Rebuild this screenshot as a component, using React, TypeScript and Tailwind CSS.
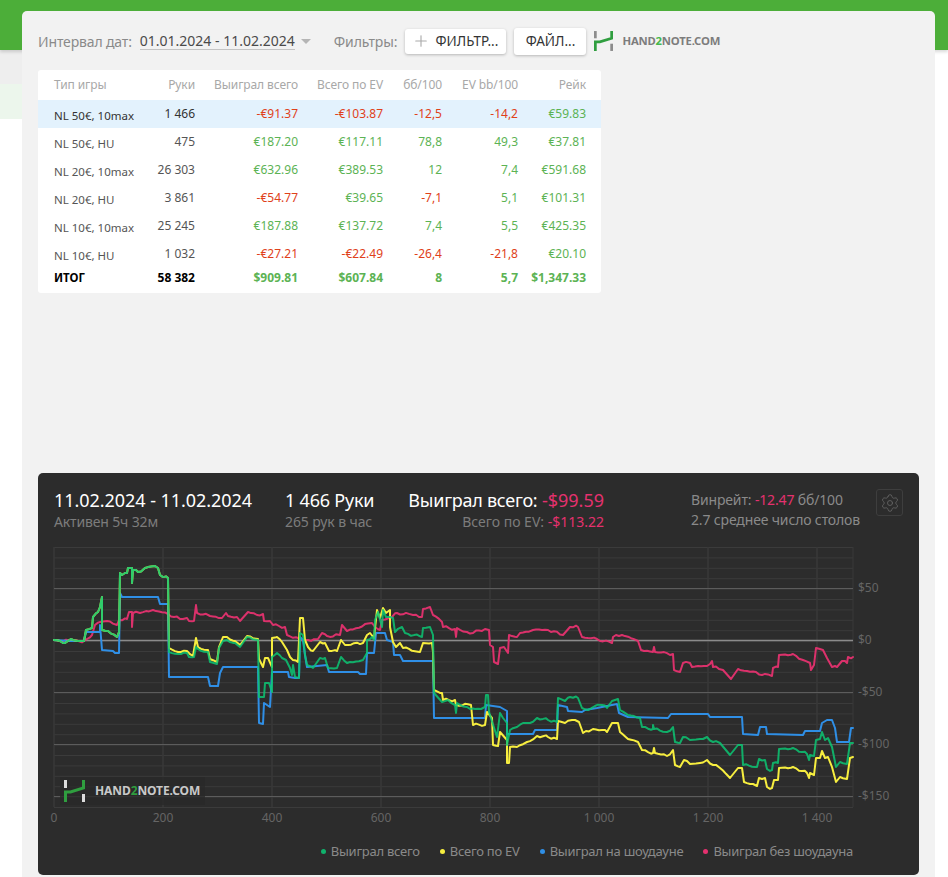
import React from "react";
import { Plus, Settings } from "lucide-react";

const rows = [
  { name: "NL 50€, 10max", hands: "1 466", won: "-€91.37", ev: "-€103.87", bb: "-12,5", evbb: "-14,2", rake: "€59.83" },
  { name: "NL 50€, HU", hands: "475", won: "€187.20", ev: "€117.11", bb: "78,8", evbb: "49,3", rake: "€37.81" },
  { name: "NL 20€, 10max", hands: "26 303", won: "€632.96", ev: "€389.53", bb: "12", evbb: "7,4", rake: "€591.68" },
  { name: "NL 20€, HU", hands: "3 861", won: "-€54.77", ev: "€39.65", bb: "-7,1", evbb: "5,1", rake: "€101.31" },
  { name: "NL 10€, 10max", hands: "25 245", won: "€187.88", ev: "€137.72", bb: "7,4", evbb: "5,5", rake: "€425.35" },
  { name: "NL 10€, HU", hands: "1 032", won: "-€27.21", ev: "-€22.49", bb: "-26,4", evbb: "-21,8", rake: "€20.10" },
];

const GRID = "grid grid-cols-[81px_60px_103px_85px_59px_76px_68px] pl-4 pr-[15px] whitespace-nowrap";

const sign = (v: string) => (v.startsWith("-") ? "text-[#e0411a]" : "text-[#5cb354]");

const green =
  "54,640 60,641 65,643 71,639 78,641 84,641 86,630 92,628 93,617 98,612 100,607 102,597 102,630 108,631 117,637 119,632 120,573 122,575 127,573 128,568 132,568 132,583 133,570 138,572 145,568 155,566 158,568 160,575 168,578 169,652 178,654 187,653 189,657 194,657 196,647 198,649 208,652 210,662 217,664 219,648 223,641 227,640 235,643 240,647 247,637 258,640 259,697 264,697 265,683 269,683 272,692 272,657 277,653 282,658 286,660 290,668 292,675 293,665 295,677 299,678 300,633 303,635 305,655 307,665 313,668 320,658 325,658 328,668 337,668 341,657 347,663 363,660 367,653 367,640 372,637 374,640 375,620 378,612 382,627 383,610 386,617 390,617 393,618 395,632 402,627 405,633 422,637 423,628 430,627 433,635 434,693 442,702 448,700 455,705 456,713 457,703 467,707 475,709 485,707 486,695 488,695 489,712 497,737 500,713 503,718 507,723 507,745 510,730 517,727 523,723 530,723 537,718 548,720 557,722 558,698 565,701 570,697 578,698 582,708 588,710 595,706 602,705 607,708 612,701 618,699 620,710 628,715 640,718 642,727 653,729 653,725 654,729 667,732 673,727 675,742 680,743 683,737 690,740 700,739 707,737 713,742 720,743 730,755 738,745 742,745 743,765 757,767 759,759 765,760 767,769 772,770 773,763 778,763 779,749 793,748 807,754 809,760 810,755 814,756 816,740 820,739 822,732 825,740 828,738 832,747 836,767 840,762 847,764 850,743 853,743";

const yellow =
  "54,640 60,641 65,643 71,639 78,641 84,641 86,630 92,628 93,617 98,612 100,607 102,597 102,630 108,631 117,637 119,632 120,573 122,575 127,573 128,568 132,568 132,583 133,570 138,572 145,568 155,566 158,568 160,575 168,578 169,648 178,652 187,651 193,656 196,638 198,647 208,650 210,659 217,662 219,647 223,637 227,637 235,641 240,645 247,636 258,639 259,659 263,667 265,658 268,658 272,667 272,638 277,637 282,642 287,650 290,657 298,662 300,618 303,618 305,640 308,647 313,651 320,642 325,643 329,651 337,651 341,640 345,645 363,643 367,635 370,633 374,638 377,610 380,618 383,608 386,613 390,610 390,627 393,642 396,647 400,643 403,648 420,652 423,643 432,643 433,652 434,690 442,693 443,700 455,700 456,705 471,705 473,725 485,725 487,712 492,718 493,745 498,746 500,732 507,740 507,763 509,763 510,747 517,747 527,742 537,736 548,737 557,739 558,721 565,723 572,720 579,722 583,733 593,729 602,730 607,732 612,723 618,723 620,732 628,739 638,742 642,750 653,753 654,748 655,753 667,756 673,750 675,765 680,767 684,760 690,764 700,763 707,760 713,765 720,768 730,778 738,768 742,768 744,782 757,786 759,778 765,778 767,787 772,788 774,780 778,780 779,768 793,767 807,773 809,778 810,773 814,775 816,758 820,758 822,751 825,758 828,757 832,767 836,782 840,777 847,779 850,758 853,757";

const blue =
  "54,640 70,641 84,641 86,632 100,632 100,625 102,650 113,651 115,653 119,653 120,593 122,597 158,597 160,604 168,604 169,677 208,677 210,686 218,686 220,673 223,667 258,667 259,723 263,724 264,703 270,707 272,672 288,672 289,677 295,678 299,678 300,637 303,640 305,655 307,667 327,665 329,672 358,672 360,674 366,674 367,653 374,653 376,633 385,633 387,640 393,642 394,655 400,655 403,661 433,661 434,718 485,718 486,705 500,707 507,711 507,734 533,734 535,730 557,730 558,705 567,707 568,711 582,712 585,710 597,708 612,705 617,704 619,713 628,717 668,718 671,714 708,714 710,717 742,717 743,734 758,735 760,727 766,727 767,734 803,735 805,731 820,731 822,723 827,720 832,720 835,728 837,742 849,742 851,728 853,728";

const pink =
  "54,640 70,641 84,641 87,639 92,635 95,625 100,622 107,621 117,625 119,620 127,619 129,612 132,612 132,627 133,613 140,613 153,610 168,614 180,619 187,618 189,621 194,621 196,605 197,613 210,616 222,618 226,613 228,616 237,617 240,621 248,612 257,615 263,614 264,621 270,621 273,625 285,627 287,635 298,638 308,640 318,639 322,633 327,636 340,635 342,625 347,631 372,623 375,627 380,630 382,620 389,618 397,613 413,615 422,617 423,609 430,607 433,615 442,622 443,627 455,629 456,637 457,628 467,632 473,633 485,629 489,630 490,645 493,647 494,662 498,664 500,648 504,647 508,653 509,635 517,637 520,633 533,630 548,630 563,635 570,627 578,627 582,637 597,639 612,643 613,637 622,635 638,641 641,650 653,652 654,647 655,652 673,654 674,670 680,672 683,663 690,663 692,667 707,666 712,661 713,667 723,670 731,679 738,669 747,671 772,676 773,668 778,667 779,655 793,654 803,660 810,663 811,670 814,665 816,648 823,650 827,658 832,667 837,667 842,661 847,663 848,657 853,657";

// small wobble on the flatter stretches, the real curves are never straight
const rough = (points: string) => {
  const pts = points.split(" ").map((p) => p.split(",").map(Number));
  const out: string[] = [];
  pts.forEach(([x, y], i) => {
    out.push(`${x},${y}`);
    const next = pts[i + 1];
    if (!next) return;
    const dx = next[0] - x;
    const dy = next[1] - y;
    if (dx < 5 || Math.abs(dy) > dx) return;
    for (let s = 3; s < dx - 1; s += 3) {
      const px = x + s;
      const wob = Math.sin(px * 1.7) * 0.8 + Math.sin(px * 0.63) * 0.6;
      out.push(`${px},${(y + (dy * s) / dx + wob).toFixed(1)}`);
    }
  });
  return out.join(" ");
};

const minor = Array.from({ length: 26 }, (_, i) => 547.5 + i * 10.4);
const major = [
  { y: 588.5, label: "$50", stroke: "#5c5c5c", w: 1 },
  { y: 640.5, label: "$0", stroke: "#8a8a8a", w: 1.5 },
  { y: 692.5, label: "-$50", stroke: "#5c5c5c", w: 1 },
  { y: 744.5, label: "-$100", stroke: "#5c5c5c", w: 1 },
  { y: 796.5, label: "-$150", stroke: "#5c5c5c", w: 1 },
];
const ticks = [
  { x: 54, label: "0" },
  { x: 163, label: "200" },
  { x: 272, label: "400" },
  { x: 381, label: "600" },
  { x: 490, label: "800" },
  { x: 599, label: "1 000" },
  { x: 708, label: "1 200" },
  { x: 817, label: "1 400" },
];

const legend = [
  { label: "Выиграл всего", dot: "bg-[#10b26c]" },
  { label: "Всего по EV", dot: "bg-[#f7ee3f]" },
  { label: "Выиграл на шоудауне", dot: "bg-[#2f8fe6]" },
  { label: "Выиграл без шоудауна", dot: "bg-[#e5316f]" },
];

const LogoMark = ({ stub, className }: { stub: string; className: string }) => (
  <svg viewBox="0 0 21 22" className={className} fill="none">
    <rect x="0" y="0" width="3" height="8" fill={stub} />
    <rect x="18" y="14" width="3" height="8" fill={stub} />
    <path d="M1.5 22V12H6.5L19.5 8V0" stroke="#2f9e3f" strokeWidth="3" />
  </svg>
);

const Chart = () => (
  <div className="relative h-[290px]">
    <svg viewBox="38 540 881 290" className="block w-[881px] h-[290px]" fill="none">
      {minor.map((y) => (
        <line key={y} x1="54" x2="853" y1={y} y2={y} stroke="#3b3b3b" />
      ))}
      {ticks.map((t) => (
        <line key={t.x} x1={t.x} x2={t.x} y1="547" y2="807" stroke="#383838" strokeWidth="1.5" />
      ))}
      <line x1="853" x2="853" y1="547" y2="807" stroke="#383838" />
      {major.map((m) => (
        <line key={m.y} x1="54" x2="853" y1={m.y} y2={m.y} stroke={m.stroke} strokeWidth={m.w} />
      ))}
      <g strokeWidth="2" strokeLinejoin="round" strokeLinecap="round">
        <polyline points={rough(pink)} stroke="#e5316f" strokeOpacity="0.95" />
        <polyline points={blue} stroke="#2f8fe6" />
        <polyline points={rough(yellow)} stroke="#f7ee3f" />
        <polyline points={rough(green)} stroke="#0cc673" strokeOpacity="0.85" />
      </g>
      <g className="text-[12px]" fill="#656565">
        {major.map((m) => (
          <text key={m.label} x="858" y={m.y + 3.5}>
            {m.label}
          </text>
        ))}
        {ticks.map((t) => (
          <text key={t.label} x={t.x} y="822" textAnchor="middle">
            {t.label}
          </text>
        ))}
      </g>
    </svg>
    <div className="absolute left-[22px] top-[237px] flex items-center w-[145px] h-[28px] pl-1 bg-[#292929]/80">
      <LogoMark stub="#dcdcdc" className="w-[21px] h-[22px]" />
      <span className="ml-[10px] font-['Open_Sans',sans-serif] font-bold text-[12px] text-[#c9c9c9] tracking-[-0.1px]">
        HAND<span className="text-[#2f9e3f]">2</span>NOTE.COM
      </span>
    </div>
  </div>
);

export default function App() {
  return (
    <div className="relative h-[877px] overflow-hidden bg-white font-['Roboto',sans-serif]">
      <div className="relative h-[50px] bg-[#4cae39] shadow-[0_2px_3px_rgba(0,0,0,0.15)]" />
      <div className="w-[60px] h-[34px] bg-[#eeeeee]" />
      <div className="w-[60px] h-[35px] bg-[#ecf6ec]" />

      <div className="absolute left-[22px] top-[11px] w-[913px] h-[880px] rounded-[5px] bg-[#f2f2f2] px-4">
        <div className="flex items-center h-[59px] pt-[1px] text-[14px] text-[#8a8a8a] whitespace-nowrap">
          <span className="tracking-[-0.15px]">Интервал дат:</span>
          <span className="ml-2 text-[#4a4a4a] border-b border-[#c4c4c4] leading-[17px]">01.01.2024 - 11.02.2024</span>
          <span className="ml-[6px] w-0 h-0 border-x-[5px] border-x-transparent border-t-[5px] border-t-[#b5b5b5]" />
          <span className="ml-[23px] tracking-[-0.1px]">Фильтры:</span>
          <button className="ml-2 flex items-center w-[101px] h-[25px] pl-[7px] rounded-[3px] bg-white shadow-[0_1px_3px_rgba(0,0,0,0.25)] text-[13.5px] text-[#333]">
            <Plus size={18} strokeWidth={1.5} className="text-[#aaa]" />
            <span className="ml-[5px]">ФИЛЬТР...</span>
          </button>
          <button className="ml-2 w-[72px] h-[27px] rounded-[3px] bg-white shadow-[0_1px_3px_rgba(0,0,0,0.25)] text-[13.5px] text-[#333]">
            ФАЙЛ...
          </button>
          <LogoMark stub="#8c8c8c" className="ml-2 w-[19px] h-[22px]" />
          <span className="ml-[9px] font-['Open_Sans',sans-serif] font-bold text-[11.3px] text-[#7d7d7d] tracking-[-0.2px]">
            HAND<span className="text-[#45b84d]">2</span>NOTE.COM
          </span>
        </div>

        <div className="w-[563px] rounded-[3px] bg-white text-[12px]">
          <div className={`${GRID} h-[30px] items-center text-[#a8a8a8] tracking-[-0.1px]`}>
            <span>Тип игры</span>
            <span className="text-right">Руки</span>
            <span className="text-right">Выиграл всего</span>
            <span className="text-right">Всего по EV</span>
            <span className="text-right">бб/100</span>
            <span className="text-right">EV bb/100</span>
            <span className="text-right">Рейк</span>
          </div>
          {rows.map((r, i) => (
            <div key={r.name} className={`${GRID} h-[28px] pt-[5px] ${i === 0 ? "bg-[#e3f2fd]" : ""}`}>
              <span className={`pt-[2px] text-[11.5px] ${i === 0 ? "text-[#333]" : "text-[#555]"}`}>{r.name}</span>
              <span className={`text-right ${i === 0 ? "text-[#333]" : "text-[#555]"}`}>{r.hands}</span>
              <span className={`text-right ${sign(r.won)}`}>{r.won}</span>
              <span className={`text-right ${sign(r.ev)}`}>{r.ev}</span>
              <span className={`text-right ${sign(r.bb)}`}>{r.bb}</span>
              <span className={`text-right ${sign(r.evbb)}`}>{r.evbb}</span>
              <span className={`text-right ${sign(r.rake)}`}>{r.rake}</span>
            </div>
          ))}
          <div className={`${GRID} h-[25px] pb-[5px] items-center font-bold text-[#5cb354]`}>
            <span className="text-black text-[11.5px]">ИТОГ</span>
            <span className="text-right text-black">58 382</span>
            <span className="text-right">$909.81</span>
            <span className="text-right">$607.84</span>
            <span className="text-right">8</span>
            <span className="text-right">5,7</span>
            <span className="text-right">$1,347.33</span>
          </div>
        </div>

        <div className="mt-[180px] w-[881px] h-[402px] rounded-[5px] bg-[#2c2c2c]">
          <div className="flex h-[67px] pl-4 pt-[16px] whitespace-nowrap">
            <div className="w-[231px]">
              <div className="text-[18px] leading-[22px] text-white tracking-[-0.05px]">11.02.2024 - 11.02.2024</div>
              <div className="text-[14px] leading-[22px] text-[#7c7c7c] tracking-[-0.15px]">Активен 5ч 32м</div>
            </div>
            <div className="w-[122px]">
              <div className="text-[18px] leading-[22px] text-white tracking-[-0.2px]">1 466 Руки</div>
              <div className="text-[14px] leading-[22px] text-[#7c7c7c] tracking-[-0.1px]">265 рук в час</div>
            </div>
            <div className="w-[197px] text-right">
              <div className="text-[18px] leading-[22px] text-white">
                <span className="tracking-[-0.25px]">Выиграл всего: </span>
                <span className="text-[#e5316f]">-$99.59</span>
              </div>
              <div className="text-[14px] leading-[22px] text-[#7c7c7c]">
                Всего по EV: <span className="text-[#e5316f]">-$113.22</span>
              </div>
            </div>
            <div className="ml-[87px] w-[185px] text-[14px] leading-[20px] text-[#8a8a8a] tracking-[-0.15px]">
              <div className="pt-[1px]">
                Винрейт: <span className="text-[#e5316f]">-12.47</span> бб/100
              </div>
              <div>2.7 среднее число столов</div>
            </div>
            <div className="w-[27px] h-[27px] flex items-center justify-center rounded-[3px] border border-[#3e3e3e]">
              <Settings size={20} strokeWidth={1} className="text-[#666]" />
            </div>
          </div>
          <Chart />
          <div className="flex justify-end gap-[20px] pr-[66px] pt-[10px] text-[13px] leading-[22px] text-[#8a8a8a] whitespace-nowrap tracking-[-0.25px]">
            {legend.map((l) => (
              <div key={l.label} className="flex items-center gap-[5px]">
                <span className={`w-[5px] h-[5px] rounded-full ${l.dot}`} />
                {l.label}
              </div>
            ))}
          </div>
        </div>
      </div>
    </div>
  );
}
